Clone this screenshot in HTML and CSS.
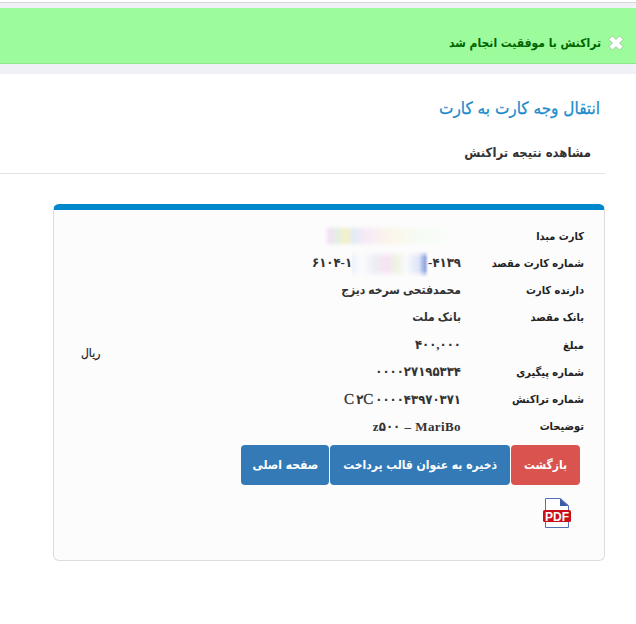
FILE: index.html
```html
<!DOCTYPE html>
<html lang="fa" dir="rtl">
<head>
<meta charset="utf-8">
<title>انتقال وجه کارت به کارت</title>
<link rel="stylesheet" href="styles.css">
</head>
<body>
<div class="top-strip"></div>
<div class="alert">
  <svg class="alert-x" width="16" height="16" viewBox="0 0 16 16" aria-label="بستن">
    <path d="M4.500 1 8 4.500 11.500 1 15 4.500 11.500 8 15 11.500 11.500 15 8 11.500 4.500 15 1 11.500 4.500 8 1 4.500Z" fill="#fff" stroke="#8a9a8a" stroke-width=".5"/>
  </svg>
  <span class="alert-text">تراکنش با موفقیت انجام شد</span>
</div>
<main class="content">
  <h1 class="title">انتقال وجه کارت به کارت</h1>
  <div class="tabs"><span class="tab">مشاهده نتیجه تراکنش</span></div>
  <section class="card">
    <div class="rows">
      <div class="grid">
        <div class="label">کارت مبدا</div>
        <div class="value"><span class="blur blur-a"></span></div>
        <div class="label">شماره کارت مقصد</div>
        <div class="value num"><bdi class="ltr">۶۱۰۴-۱<span class="blur blur-b"></span>-۴۱۳۹</bdi></div>
        <div class="label">دارنده کارت</div>
        <div class="value">محمدفتحی سرخه دیزج</div>
        <div class="label">بانک مقصد</div>
        <div class="value">بانک ملت</div>
        <div class="label">مبلغ</div>
        <div class="value num amount">۴۰۰,۰۰۰</div>
        <div class="label">شماره پیگیری</div>
        <div class="value num">۰۰۰۰۲۷۱۹۵۳۳۴</div>
        <div class="label">شماره تراکنش</div>
        <div class="value num trx"><bdi class="ltr"><span class="latin">C</span>۲<span class="latin">C</span>۰۰۰۰۴۳۹۷۰۳۷۱</bdi></div>
        <div class="label">توضیحات</div>
        <div class="value desc"><bdi class="ltr">z۵۰۰ – MariBo</bdi></div>
      </div>
      <div class="unit">ریال</div>
    </div>
    <div class="actions">
      <a class="btn btn-red">بازگشت</a>
      <a class="btn btn-blue">ذخیره به عنوان قالب پرداخت</a>
      <a class="btn btn-blue btn-home">صفحه اصلی</a>
    </div>
    <svg class="pdf" width="28" height="30" viewBox="0 0 28 30" aria-label="PDF">
      <path d="M2.500 .5H17.500L25.500 7.500V29.500H2.500Z" fill="#fff" stroke="#5470b4" stroke-width="1"/>
      <path d="M17 .5V8H25.500Z" fill="#3c5aa6"/>
      <rect x="0" y="12" width="28" height="12" rx="1.500" fill="#c8101a"/>
      <text x="14" y="22.500" class="pdf-text" text-anchor="middle">PDF</text>
    </svg>
  </section>
</main>
</body>
</html>
```
FILE: styles.css
```css
* { box-sizing: border-box; }
html, body { margin: 0; padding: 0; background: #fff; }
body {
  width: 636px;
  height: 624px;
  overflow: hidden;
  font-family: "DejaVu Sans Condensed", "DejaVu Sans", sans-serif;
  color: #333;
}
.top-strip {
  height: 8px;
  background: #eff1f6;
  border-top: 2px solid #fff;
  box-shadow: inset 0 1px 0 #d8d8dc;
}
.alert {
  height: 56px;
  background: #9cfc9c;
  border-bottom: 1px solid #8fe68f;
  display: flex;
  align-items: center;
  gap: 7px;
  padding: 15px 12px 0 0;
  margin-bottom: 10px;
  box-shadow: 0 10px 0 #eff1f6;
}
.alert-x { flex: none; }
.alert-text { color: #006400; font-size: 12px; font-weight: 700; line-height: 20px; }
.title {
  margin: 0;
  padding: 22px 36px 0 0;
  height: 51px;
  color: #1a8acb;
  font-size: 17px;
  font-weight: 400;
  line-height: 24px;
  -webkit-text-stroke: .25px #1a8acb;
}
.tabs {
  width: 605px;
  margin-right: 31px;
  height: 49px;
  padding: 18px 14px 0 0;
  border-bottom: 1px solid #e3e3e3;
}
.tab { font-size: 13px; font-weight: 700; line-height: 20px; display: block; }
.card {
  width: 552px;
  height: 357px;
  margin: 30px 31px 0 0;
  background: #fcfcfc;
  border: 1px solid #ddd;
  border-top: 6px solid #0088cc;
  border-radius: 6px;
  padding: 13px 20px 0 0;
}
.rows { display: flex; align-items: center; justify-content: space-between; height: 217px; padding-left: 27px; }
.grid {
  display: grid;
  grid-template-columns: 123px 1fr;
  grid-auto-rows: 27.2px;
  align-items: center;
  flex: 1;
}
.label { font-size: 11px; font-weight: 700; color: #222; white-space: nowrap; }
.value { font-family: "Liberation Serif", "DejaVu Sans Condensed", serif; font-size: 12px; font-weight: 700; color: #333; white-space: nowrap; }
.num { font-size: 13px; letter-spacing: 1px; }
.amount { letter-spacing: 2.400px; }
.trx { letter-spacing: 2px; }
.latin { font-size: 15px; font-weight: 400; -webkit-text-stroke: .3px #333; }
.desc { font-size: 13px; word-spacing: 1px; letter-spacing: .4px; }
.ltr { direction: ltr; unicode-bidi: isolate; }
.unit { font-size: 12px; font-weight: 400; color: #222; width: 120px; text-align: left; margin-top: 42px; -webkit-text-stroke: .2px #222; }
.blur { display: inline-block; vertical-align: middle; }
.blur-a {
  width: 137px; height: 22px;
  background:
    linear-gradient(90deg, #fcfcfc, #f3e2f3 4%, #e2f0e2 10%, #f6f0c8 16%, #e2ecf8 22%, #f6eaf6 30%, #fbf7ea 50%, #f6fcf6 72%, #fcfcfc);
  -webkit-mask-image: linear-gradient(180deg, transparent, #000 25%, #000 75%, transparent);
  mask-image: linear-gradient(180deg, transparent, #000 25%, #000 75%, transparent);
}
.blur-b {
  width: 76px; height: 26px;
  background:
    linear-gradient(90deg, #eef3fa, #fafbfc 14%, #eceef6 30%, #f8e2f2 46%, #eef3e2 58%, #f8f9fc 72%, #dde4f7 88%, #8ea4e0 96%, #eef1fa);
  -webkit-mask-image: linear-gradient(180deg, transparent, #000 25%, #000 75%, transparent);
  mask-image: linear-gradient(180deg, transparent, #000 25%, #000 75%, transparent);
}
.actions { display: flex; gap: 1px; margin-top: 5px; padding-right: 4px; }
.btn {
  display: flex;
  align-items: center;
  height: 40px;
  padding: 0 13px;
  border-radius: 4px;
  color: #fff;
  font-size: 12px;
  font-weight: 700;
  white-space: nowrap;
}
.btn-home { padding: 0 11px; }
.btn-red { background: #d9534f; }
.btn-blue { background: #337ab7; }
.pdf { display: block; margin: 13px 13px 0 0; }
.pdf-text { font-family: "Liberation Sans", sans-serif; font-size: 12px; font-weight: 700; fill: #fff; }
```
